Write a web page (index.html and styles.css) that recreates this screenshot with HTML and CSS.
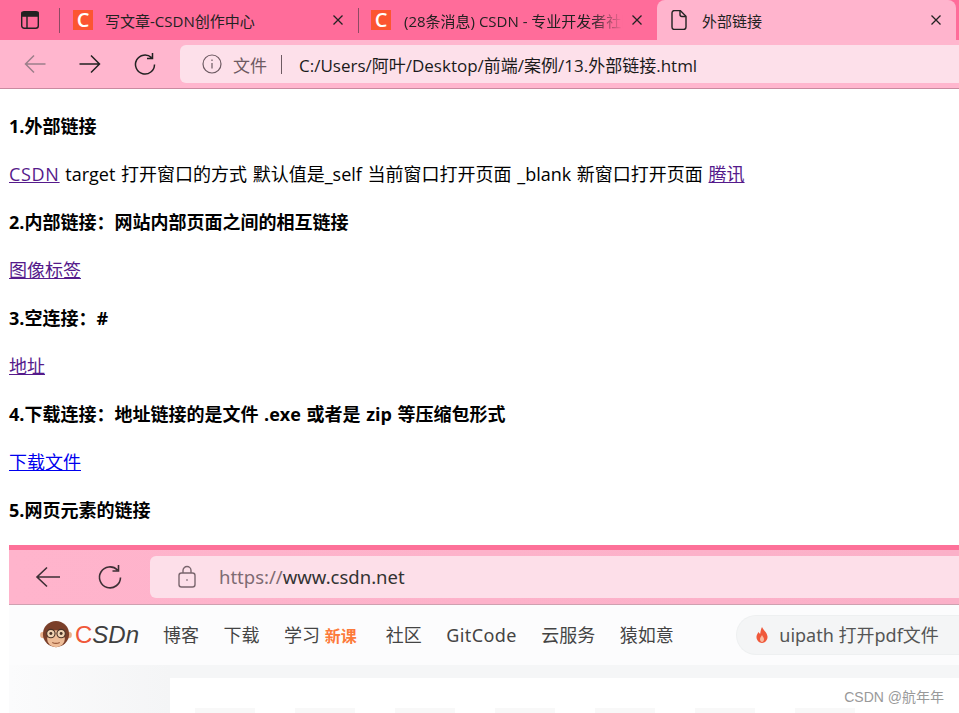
FILE: index.html
```html
<!DOCTYPE html>
<html lang="zh-CN">
<head>
    <meta charset="UTF-8">
    <title>外部链接</title>
    <link rel="stylesheet" href="styles.css">
</head>
<body>
    <div class="tab-strip">
        <div class="strip-btn">
            <svg width="20" height="20" viewBox="0 0 20 20" fill="none" stroke="#222" stroke-width="1.4">
                <rect x="1.700" y="1.700" width="16.600" height="16.600" rx="2.500"/>
                <path d="M2 2.500h16v3.600H2z" fill="#222"/>
                <path d="M7 6v12"/>
            </svg>
        </div>
        <div class="tab tab-first">
            <span class="favicon">C</span>
            <span class="tab-title">写文章-CSDN创作中心</span>
            <svg class="close" width="12" height="12" viewBox="0 0 12 12" stroke="#222" stroke-width="1.300"><path d="M1.500 1.500l9 9M10.500 1.500l-9 9"/></svg>
        </div>
        <div class="tab tab-second">
            <span class="favicon">C</span>
            <span class="tab-title fade">(28条消息) CSDN - 专业开发者社区</span>
            <svg class="close" width="12" height="12" viewBox="0 0 12 12" stroke="#222" stroke-width="1.300"><path d="M1.500 1.500l9 9M10.500 1.500l-9 9"/></svg>
        </div>
        <div class="tab active">
            <svg class="doc" width="20" height="20" viewBox="0 0 20 20" fill="none" stroke="#222" stroke-width="1.400">
                <path d="M3 3a2.500 2.500 0 0 1 2.500-2.500h5.700l5.800 5.800V17a2.500 2.500 0 0 1-2.500 2.500h-9A2.500 2.500 0 0 1 3 17z"/>
                <path d="M11 .7V4.500a2 2 0 0 0 2 2h3.800"/>
            </svg>
            <span class="tab-title">外部链接</span>
            <svg class="close" width="12" height="12" viewBox="0 0 12 12" stroke="#222" stroke-width="1.300"><path d="M1.500 1.500l9 9M10.500 1.500l-9 9"/></svg>
        </div>
    </div>

    <div class="toolbar">
        <div class="nav-btns">
            <svg width="24" height="24" viewBox="0 0 24 24" fill="none" stroke="#9c7f8a" stroke-width="1.500"><path d="M2.500 12h20M11 3.500L2.500 12l8.500 8.500"/></svg>
            <svg width="24" height="24" viewBox="0 0 24 24" fill="none" stroke="#222" stroke-width="1.500"><path d="M21.500 12h-20M13 3.500l8.500 8.500-8.500 8.500"/></svg>
            <svg width="24" height="24" viewBox="0 0 24 24" fill="none" stroke="#222" stroke-width="1.500"><path d="M21.500 12.500A9.500 9.500 0 1 1 18.500 5.600M19.500 1v5.500H14"/></svg>
        </div>
        <div class="address">
            <svg width="20" height="20" viewBox="0 0 20 20" fill="none" stroke="#6d5a62" stroke-width="1.200"><circle cx="10" cy="10" r="9"/><path d="M10 9v5.500M10 5.500v1.500"/></svg>
            <span class="scheme">文件</span>
            <span class="sep"></span>
            <span class="url">C:/Users/阿叶/Desktop/前端/案例/13.外部链接.html</span>
        </div>
    </div>

    <div class="page">
        <p><b>1.外部链接</b></p>
        <p><a href="#" class="csdn-link">CSDN</a> target 打开窗口的方式 默认值是_self 当前窗口打开页面 _blank 新窗口打开页面 <a href="#">腾讯</a></p>
        <p><b>2.内部链接：网站内部页面之间的相互链接</b></p>
        <p><a href="#">图像标签</a></p>
        <p><b>3.空连接：#</b></p>
        <p><a href="#">地址</a></p>
        <p><b>4.下载连接：地址链接的是文件 .exe 或者是 zip 等压缩包形式</b></p>
        <p><a href="#" class="fresh">下载文件</a></p>
        <p class="last"><b>5.网页元素的链接</b></p>

        <div class="shot">
            <div class="shot-strip"></div>
            <div class="shot-toolbar">
                <svg width="26" height="26" viewBox="0 0 26 26" fill="none" stroke="#3d2f35" stroke-width="1.600"><path d="M25 13H2M12 3.500L2 13l10 9.500"/></svg>
                <svg class="shot-reload" width="26" height="26" viewBox="0 0 26 26" fill="none" stroke="#3d2f35" stroke-width="1.600"><path d="M23.500 13.500A10.500 10.500 0 1 1 20.500 6M21.500 1v6h-6"/></svg>
                <div class="shot-address">
                    <svg width="20" height="24" viewBox="0 0 20 24" fill="none" stroke="#7a666e" stroke-width="1.400"><rect x="2" y="8" width="16" height="14" rx="2.500"/><path d="M6 8V5.500a4 4 0 0 1 8 0V8"/><path d="M9.300 15h1.400"/></svg>
                    <span class="shot-url"><i>https://</i>www.csdn.net</span>
                </div>
            </div>
            <div class="shot-nav">
                <svg width="32" height="28" viewBox="0 0 34 30">
                    <circle cx="3.500" cy="15" r="3.500" fill="#e8b08c"/>
                    <circle cx="30.500" cy="15" r="3.500" fill="#e8b08c"/>
                    <circle cx="17" cy="14" r="14" fill="#7a3f2a"/>
                    <ellipse cx="17" cy="19" rx="9.500" ry="9" fill="#eebd98"/>
                    <circle cx="11.500" cy="13.500" r="4.500" fill="#f0d4b4" stroke="#4a3328" stroke-width="1.200"/>
                    <circle cx="22.500" cy="13.500" r="4.500" fill="#f0d4b4" stroke="#4a3328" stroke-width="1.200"/>
                    <circle cx="11.500" cy="13.500" r="1.600" fill="#4a3328"/>
                    <circle cx="22.500" cy="13.500" r="1.600" fill="#4a3328"/>
                    <path d="M13 23q4 2 8 0" fill="none" stroke="#9a5a3c" stroke-width="1.200"/>
                </svg>
                <span class="logo"><em>C</em><i>SDn</i></span>
                <span class="nav-item">博客</span>
                <span class="nav-item">下载</span>
                <span class="nav-item nav-study">学习 <b>新课</b></span>
                <span class="nav-item">社区</span>
                <span class="nav-item nav-gitcode">GitCode</span>
                <span class="nav-item">云服务</span>
                <span class="nav-item">猿如意</span>
                <div class="search">
                    <svg width="14" height="16" viewBox="0 0 14 16"><path d="M7 0c1 3 5 5 5.500 9.500C12.800 13 10 16 7 16S1.200 13 1.500 9.500C1.700 7.500 3 6 3.500 5c.5 1 1 1.500 1.700 1.800C5.500 4.500 6 2 7 0z" fill="#f0583a"/><path d="M7 8c.5 1.500 2 2.500 2 4.300C9 13.800 8 15 7 15s-2-1.200-2-2.700C5 10.500 6.500 9.500 7 8z" fill="#f9b9a0"/></svg>
                    <span>uipath 打开pdf文件</span>
                </div>
            </div>
            <div class="shot-body">
                <div class="shot-side"></div>
                <div class="shot-main">
                    <span></span><span></span><span></span><span></span><span></span><span></span><span></span>
                </div>
            </div>
            <span class="watermark">CSDN @航年年</span>
        </div>
    </div>
</body>
</html>
```

FILE: styles.css
```css
* {
    box-sizing: border-box;
}

html, body {
    height: 100%;
}

body {
    margin: 0;
    font-family: "Open Sans", "Noto Sans CJK SC", sans-serif;
    background-color: #fff;
    color: #000;
    overflow: hidden;
}

.tab-strip {
    display: flex;
    height: 40px;
    background-color: #ff6c9a;
    font-size: 15px;
    color: #222;
}

.strip-btn {
    width: 59px;
    display: flex;
    align-items: center;
    justify-content: center;
}

.tab {
    width: 299px;
    height: 40px;
    display: flex;
    align-items: center;
    padding-left: 13px;
    padding-right: 14px;
    position: relative;
    border-left: 1px solid transparent;
}

.tab::before {
    content: "";
    position: absolute;
    left: -1px;
    top: 8px;
    height: 25px;
    width: 1px;
    background-color: #8e4a63;
}

.tab-second {
    width: 297px;
    padding-left: 12px;
    padding-right: 12px;
}

.tab-second .tab-title {
    margin-left: 13px;
}

.tab.active {
    margin-left: 2px;
    background-color: #ffb4cd;
    border-radius: 8px 8px 0 0;
    padding-left: 11px;
}

.tab.active::before {
    display: none;
}

.favicon {
    width: 20px;
    height: 20px;
    background-color: #fc5531;
    color: #fff;
    font-size: 20px;
    font-weight: 600;
    line-height: 20px;
    text-align: center;
    flex: none;
}

.doc {
    flex: none;
}

.tab-title {
    flex: 1;
    margin-left: 12px;
    white-space: nowrap;
    overflow: hidden;
}

.tab.active .tab-title {
    margin-left: 13px;
}

.tab-title.fade {
    -webkit-mask-image: linear-gradient(to right, #000 85%, transparent);
    mask-image: linear-gradient(to right, #000 85%, transparent);
}

.close {
    flex: none;
    margin-left: 8px;
}

.toolbar {
    height: 49px;
    display: flex;
    background-color: #ffb6ce;
    border-bottom: 1px solid #c98aa0;
    padding-top: 5px;
    padding-bottom: 5px;
}

.nav-btns {
    width: 180px;
    display: flex;
    align-items: center;
    padding-left: 23px;
    gap: 31px;
}

.address {
    flex: 1;
    display: flex;
    align-items: center;
    background-color: #fde0ea;
    border-radius: 6px 0 0 6px;
    padding-left: 22px;
    font-size: 17px;
}

.scheme {
    margin-left: 11px;
    color: #6d5a62;
}

.sep {
    width: 1px;
    height: 19px;
    background-color: #6d5a62;
    margin-left: 14px;
}

.url {
    margin-left: 17px;
    color: #1a1a1a;
}

.page {
    padding: 25px 0 0 9px;
    font-size: 18px;
    line-height: 24px;
    word-spacing: 1px;
}

.page p {
    margin: 0 0 24px;
    height: 24px;
    white-space: nowrap;
}

.page p.last {
    margin-bottom: 23px;
}

.page a {
    color: #551a8b;
}

.page a.csdn-link {
    letter-spacing: .7px;
}

.page a.fresh {
    color: #0000ee;
}

.shot {
    position: relative;
    height: 168px;
    overflow: hidden;
    font-family: "Noto Sans", "Noto Sans CJK SC", sans-serif;
    word-spacing: 0;
}

.shot-strip {
    height: 5px;
    background-color: #fd7199;
}

.shot-toolbar {
    height: 55px;
    display: flex;
    align-items: center;
    padding-left: 26px;
    background: linear-gradient(to right, #ffb4cc, #fbb0c8);
    border-bottom: 1px solid #cfa0b0;
}

.shot-reload {
    margin-left: 36px;
}

.shot-address {
    flex: 1;
    height: 42px;
    margin-left: 27px;
    margin-bottom: 1px;
    display: flex;
    align-items: center;
    padding-left: 27px;
    background-color: #fddfe9;
    border-radius: 6px 0 0 6px;
    font-size: 18.500px;
    color: #333;
}

.shot-url {
    margin-left: 22px;
}

.shot-url i {
    font-style: normal;
    color: #7d6b73;
}

.shot-nav {
    height: 60px;
    display: flex;
    align-items: center;
    padding-left: 31px;
    background-color: #fcfcfd;
    font-size: 18px;
    line-height: 24px;
    color: #444;
}

.logo {
    margin-left: 3px;
    margin-right: 24px;
    font-family: "Liberation Sans", sans-serif;
    font-size: 24px;
    color: #3f3f3f;
}

.logo em {
    font-style: normal;
    color: #f0583a;
}

.nav-item {
    margin-right: 24.500px;
    white-space: nowrap;
}

.nav-study {
    margin-right: 29px;
}

.nav-gitcode {
    letter-spacing: .4px;
}

.nav-item b {
    font-size: 16px;
    color: #fc7a3a;
}

.search {
    flex: 1;
    height: 40px;
    margin-left: 38px;
    display: flex;
    align-items: center;
    gap: 10px;
    padding-left: 18px;
    background-color: #f4f5f6;
    border: 1px solid #eef0f1;
    border-right: none;
    border-radius: 20px 0 0 20px;
    color: #555;
    white-space: nowrap;
}

.shot-body {
    height: 48px;
    display: flex;
    background-color: #f5f6f7;
}

.shot-side {
    width: 161px;
    background: linear-gradient(to right, #fbfbfc, #f4f5f6);
}

.shot-main {
    flex: 1;
    margin-top: 13px;
    padding: 30px 0 0 25px;
    display: flex;
    gap: 40px;
    background-color: #fff;
}

.shot-main span {
    width: 60px;
    height: 5px;
    background-color: #f8f8f8;
}

.watermark {
    position: absolute;
    right: 15px;
    bottom: 6px;
    font-family: "Liberation Sans", "Noto Sans CJK SC", sans-serif;
    font-size: 14px;
    line-height: 20px;
    color: #999;
}
```
